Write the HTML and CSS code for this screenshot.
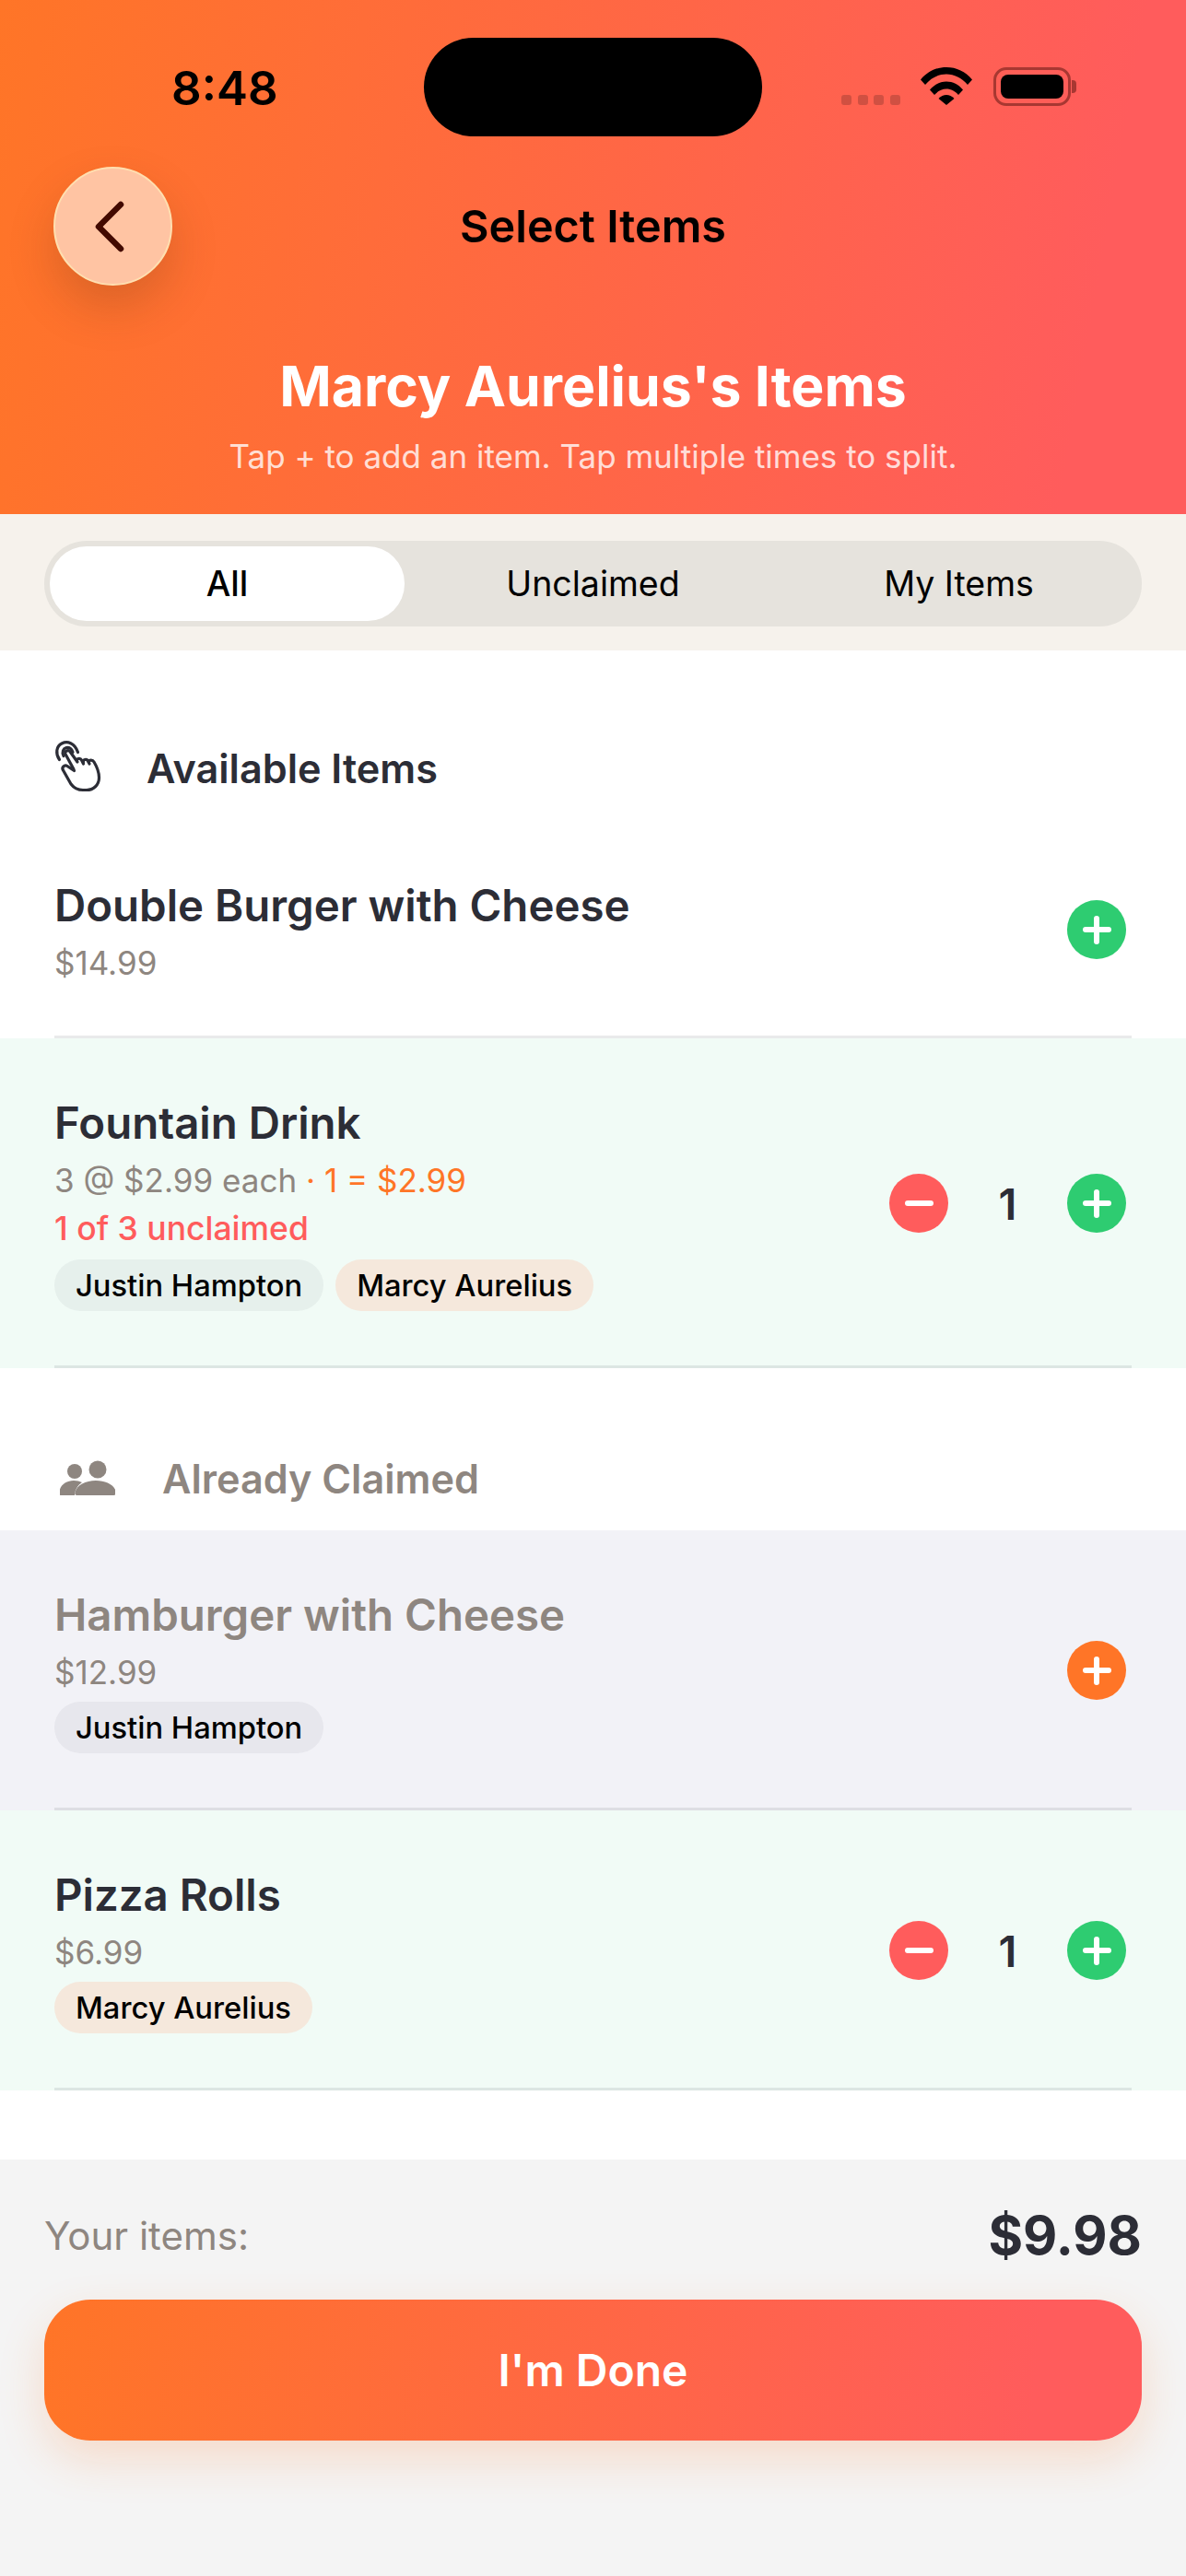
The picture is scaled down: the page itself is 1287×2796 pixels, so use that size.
FILE: index.html
```html
<!DOCTYPE html>
<html lang="en">
<head>
    <meta charset="UTF-8">
    <meta name="viewport" content="width=device-width, initial-scale=1.0">
    <title>Select Items</title>
    <link rel="stylesheet" href="styles.css">
</head>
<body>
    <div class="screen">
        <header class="header">
            <div class="status-bar">
                <span class="time">8:48</span>
                <div class="island"></div>
                <div class="status-icons">
                    <div class="signal"><i></i><i></i><i></i><i></i></div>
                    <svg class="wifi" width="56" height="41" viewBox="0 0 56 41">
                        <path d="M0 13.5C7.5 4.5 17 0 28 0s20.5 4.500 28 13.500l-5 5.500C44.500 11.500 36.500 7.500 28 7.500S11.500 11.500 5 19z"/>
                        <path d="M10 24.500C15 18.500 21 15.500 28 15.500s13 3 18 9l-5 5.500c-3.500-4-8-6.500-13-6.500s-9.500 2.500-13 6.500z"/>
                        <path d="M19.500 34C22 31.500 25 30 28 30s6 1.500 8.500 4L28 41z"/>
                    </svg>
                    <div class="battery"><div class="battery-fill"></div></div>
                    <div class="battery-nub"></div>
                </div>
            </div>
            <div class="nav">
                <button class="back-btn">
                    <svg width="40" height="60" viewBox="0 0 40 60">
                        <path d="M31 6 7 30l24 24" fill="none" stroke="#430a00" stroke-width="6.500" stroke-linecap="round" stroke-linejoin="round"/>
                    </svg>
                </button>
                <div class="nav-title">Select Items</div>
            </div>
            <h1 class="page-title">Marcy Aurelius's Items</h1>
            <p class="page-sub">Tap + to add an item. Tap multiple times to split.</p>
        </header>

        <div class="tabs-band">
            <div class="tabs">
                <div class="tab active">All</div>
                <div class="tab">Unclaimed</div>
                <div class="tab">My Items</div>
            </div>
        </div>

        <div class="section-head first">
            <svg class="hand-icon" width="60" height="64" viewBox="0 0 60 64" fill="none" stroke="#2c2d36" stroke-width="3.200" stroke-linecap="round" stroke-linejoin="round">
                <path d="M9.500 26.500C5 20 6 12 12 9c6-3 14-1 17.500 9.500"/>
                <path d="M14 22.500c-2-4-.5-8 3-9 3-.8 6 1.200 7 5"/>
                <path d="M25 37 16 20.500c-1.500-3.500 4-5.500 5.500-2L29 29"/>
                <path d="M28.500 28c-1-2.500 3.500-4 5-1l2 4"/>
                <path d="M35.500 29c-.8-2.500 3.500-3.700 5-1l1.500 3"/>
                <path d="M41 28.500c1-2 4.500-2 6 .5 3 5 5.500 11 5.500 17 0 8-6 13.500-13.500 13.500h-4c-6 0-10-2.500-13-6.500L13.500 38c-2-3 1.500-6.500 4.500-4.500l7.500 5"/>
            </svg>
            <span class="section-title">Available Items</span>
        </div>

        <div class="item">
            <div class="item-info">
                <div class="item-name">Double Burger with Cheese</div>
                <div class="item-price">$14.99</div>
            </div>
            <div class="controls">
                <button class="circle plus"><span class="bar-h"></span><span class="bar-v"></span></button>
            </div>
        </div>

        <div class="item mine">
            <div class="item-info">
                <div class="item-name">Fountain Drink</div>
                <div class="item-price">3 @ $2.99 each <span class="split">· 1 = $2.99</span></div>
                <div class="item-left">1 of 3 unclaimed</div>
                <div class="chips">
                    <span class="chip other">Justin Hampton</span>
                    <span class="chip me">Marcy Aurelius</span>
                </div>
            </div>
            <div class="controls">
                <button class="circle minus"><span class="bar-h"></span></button>
                <span class="qty">1</span>
                <button class="circle plus"><span class="bar-h"></span><span class="bar-v"></span></button>
            </div>
        </div>

        <div class="section-head second">
            <svg class="people-icon" width="60" height="40" viewBox="0 0 60 40" fill="#8e8680">
                <circle cx="16" cy="12" r="8"/>
                <circle cx="41" cy="10" r="9.500"/>
                <path d="M1 38c-1.500 0-1.500-1-1.500-3C-.500 27 7 22 15 22c3.500 0 6.500 .7 9 2-4.500 3-7.500 7.500-8 14z"/>
                <path d="M20 39c-2 0-3-1-2.500-3C19 28 29 23 40 23s21 5 22 13c.300 2-1 3-2.500 3z" transform="translate(-1 -1)"/>
            </svg>
            <span class="section-title muted">Already Claimed</span>
        </div>

        <div class="item claimed">
            <div class="item-info">
                <div class="item-name">Hamburger with Cheese</div>
                <div class="item-price">$12.99</div>
                <div class="chips">
                    <span class="chip other">Justin Hampton</span>
                </div>
            </div>
            <div class="controls">
                <button class="circle orange"><span class="bar-h"></span><span class="bar-v"></span></button>
            </div>
        </div>

        <div class="item mine">
            <div class="item-info">
                <div class="item-name">Pizza Rolls</div>
                <div class="item-price">$6.99</div>
                <div class="chips">
                    <span class="chip me">Marcy Aurelius</span>
                </div>
            </div>
            <div class="controls">
                <button class="circle minus"><span class="bar-h"></span></button>
                <span class="qty">1</span>
                <button class="circle plus"><span class="bar-h"></span><span class="bar-v"></span></button>
            </div>
        </div>

        <footer class="footer">
            <div class="total-row">
                <span class="total-label">Your items:</span>
                <span class="total-value">$9.98</span>
            </div>
            <button class="done-btn">I'm Done</button>
        </footer>
    </div>
</body>
</html>
```

FILE: styles.css
```css
* {
    box-sizing: border-box;
}
body {
    margin: 0;
    font-family: Inter, "Noto Sans", sans-serif;
    background-color: white;
    color: #2c2d36;
}
button {
    border: none;
    padding: 0;
    font-family: inherit;
}
.screen {
    width: 1287px;
    height: 2796px;
    display: flex;
    flex-direction: column;
    overflow: hidden;
}

/* header */
.header {
    height: 558px;
    background: linear-gradient(100deg, #ff7527 0%, #ff5c5c 90%);
    text-align: center;
}
.status-bar {
    position: relative;
    height: 181px;
}
.time {
    position: absolute;
    left: 186px;
    top: 64px;
    font-size: 51px;
    line-height: 64px;
    font-weight: 600;
    color: black;
}
.island {
    position: absolute;
    left: 460px;
    top: 41px;
    width: 367px;
    height: 107px;
    border-radius: 54px;
    background: black;
}
.status-icons {
    position: absolute;
    left: 913px;
    top: 73px;
    display: flex;
    align-items: flex-start;
}
.signal {
    display: flex;
    gap: 6.500px;
    margin-top: 30px;
    margin-right: 22px;
}
.signal i {
    display: block;
    width: 11px;
    height: 11px;
    border-radius: 3px;
    background: rgba(120, 50, 40, 0.35);
}
.wifi {
    margin-right: 23px;
}
.battery {
    width: 84px;
    height: 42px;
    padding: 5px;
    border: 3.500px solid rgba(110, 30, 25, 0.6);
    border-radius: 14px;
}
.battery-fill {
    width: 100%;
    height: 100%;
    background: black;
    border-radius: 8px;
}
.battery-nub {
    width: 5px;
    height: 14px;
    margin: 14px 0 0 1px;
    background: rgba(110, 30, 25, 0.6);
    border-radius: 0 4px 4px 0;
}
.nav {
    position: relative;
    height: 129px;
    display: flex;
    align-items: center;
    justify-content: center;
}
.back-btn {
    position: absolute;
    left: 58px;
    top: 0;
    width: 129px;
    height: 129px;
    border-radius: 50%;
    background: #ffc4a3;
    border: 2px solid #ffdfb0;
    box-shadow: 0 24px 50px rgba(90, 50, 20, 0.22);
    display: flex;
    align-items: center;
    justify-content: center;
}
.back-btn svg {
    margin-left: -6px;
}
.nav-title {
    font-size: 48.500px;
    font-weight: 600;
    color: black;
}
.page-title {
    margin: 70px 0 0;
    font-size: 60.700px;
    line-height: 78px;
    font-weight: 700;
    color: white;
}
.page-sub {
    margin: 17px 0 0;
    font-size: 35px;
    line-height: 40px;
    color: rgba(255, 255, 255, 0.8);
}

/* tabs */
.tabs-band {
    height: 148px;
    padding: 29px 48px 26px;
    background: #f6f2ec;
}
.tabs {
    height: 93px;
    display: grid;
    grid-template-columns: 1fr 1fr 1fr;
    padding: 6px 0;
    background: #e6e3dd;
    border-radius: 46px;
}
.tab {
    display: flex;
    align-items: center;
    justify-content: center;
    font-size: 37.500px;
    font-weight: 400;
    color: black;
}
.tab.active {
    margin: 0 6px;
    background: white;
    border-radius: 40px;
    font-weight: 500;
}

/* sections */
.section-head {
    display: flex;
    align-items: center;
    height: 50px;
    padding-left: 59px;
}
.section-head.first {
    margin: 103px 0 32px;
}
.section-head.second {
    margin: 95px 0 31px;
}
.section-title {
    font-size: 43.200px;
    font-weight: 600;
}
.section-title.muted {
    color: #8e8680;
}
.hand-icon {
    margin: 0 44px 8px -4px;
}
.people-icon {
    margin: 0 51px 0 6px;
}

/* items */
.item {
    position: relative;
    display: flex;
    align-items: center;
    justify-content: space-between;
    padding: 62px 65px 62px 59px;
}
.item::after {
    content: "";
    position: absolute;
    left: 59px;
    right: 59px;
    bottom: 0;
    height: 3px;
    background: rgba(40, 50, 60, 0.1);
}
.item.mine {
    background: #f1fbf6;
}
.item.claimed {
    background: #f2f2f7;
}
.item-name {
    font-size: 47.400px;
    line-height: 60px;
    font-weight: 600;
}
.claimed .item-name {
    color: #8e8680;
}
.item-price {
    margin-top: 12px;
    font-size: 35px;
    line-height: 40px;
    color: #8e8680;
}
.split {
    color: #ff7527;
}
.item-left {
    margin-top: 13px;
    font-size: 35.500px;
    line-height: 40px;
    font-weight: 500;
    color: #ff5c5c;
}
.chips {
    display: flex;
    gap: 13px;
    margin-top: 13px;
}
.item-price + .chips {
    margin-top: 12px;
}
.chip {
    height: 56px;
    padding: 0 23px;
    display: flex;
    align-items: center;
    border-radius: 28px;
    font-size: 32.700px;
    font-weight: 450;
    color: black;
}
.chip.other {
    background: rgba(40, 40, 60, 0.05);
}
.chip.me {
    background: #f5e8dc;
}
.controls {
    display: flex;
    align-items: center;
}
.circle {
    position: relative;
    width: 64px;
    height: 64px;
    border-radius: 50%;
}
.circle.plus {
    background: #2ecc71;
}
.circle.minus {
    background: #ff5c5c;
}
.circle.orange {
    background: #ff7527;
}
.bar-h,
.bar-v {
    position: absolute;
    left: 50%;
    top: 50%;
    background: white;
    border-radius: 3px;
}
.bar-h {
    width: 31px;
    height: 6px;
    margin: -3px 0 0 -15.500px;
}
.bar-v {
    width: 6px;
    height: 31px;
    margin: -15.500px 0 0 -3px;
}
.qty {
    width: 129px;
    text-align: center;
    font-size: 47px;
    font-weight: 600;
}

/* footer */
.footer {
    flex: 1;
    margin-top: 75px;
    padding: 44px 48px 0;
    background: #f4f4f4;
}
.total-row {
    display: flex;
    align-items: center;
    justify-content: space-between;
    height: 76px;
}
.total-label {
    font-size: 42px;
    color: #8e8680;
}
.total-value {
    font-size: 57.500px;
    font-weight: 700;
}
.done-btn {
    display: block;
    width: 100%;
    height: 153px;
    margin-top: 32px;
    border-radius: 50px;
    background: linear-gradient(95deg, #ff7527 0%, #ff5c5c 90%);
    box-shadow: 0 20px 50px rgba(255, 119, 34, 0.2);
    color: white;
    font-size: 48px;
    font-weight: 600;
}
```
